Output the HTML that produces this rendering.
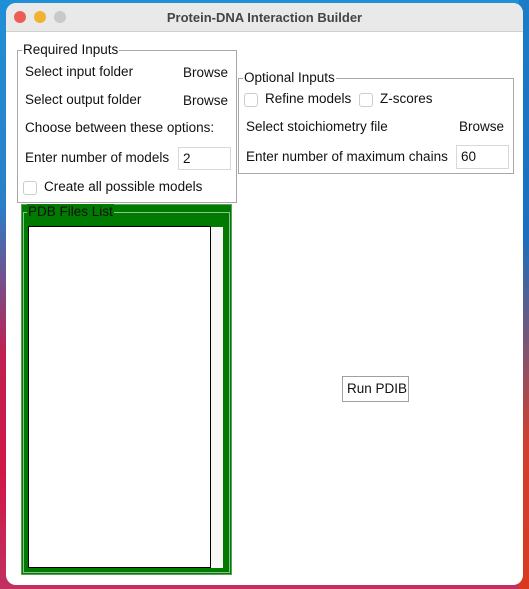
<!DOCTYPE html>
<html><head><meta charset="utf-8"><style>
*{margin:0;padding:0;box-sizing:border-box}
body{width:529px;height:589px;overflow:hidden;position:relative;font-family:"Liberation Sans",sans-serif;font-size:13.5px;color:#111;
background:linear-gradient(180deg,#1f8fd6 0%,#2a7fc8 35%,#c02050 60%,#d01848 80%,#c03060 100%)}
.bgr{position:absolute;right:0;top:0;width:10px;height:589px;background:linear-gradient(180deg,#1c7cc8 0%,#1a6fc0 40%,#d04030 75%,#d83a20 100%)}
.win{position:absolute;left:6px;top:3px;width:517px;height:582px;background:#fff;border-radius:10px;overflow:hidden}
.tb{height:29px;background:#e9e9e9;border-bottom:1px solid #d0d0d0;text-align:center;font-weight:bold;color:#444;line-height:29px;font-size:13px}
.dot{position:absolute;top:8px;width:12px;height:12px;border-radius:50%}
.a{position:absolute;white-space:nowrap}
.frame{position:absolute;border:1px solid #a8a8a8}
.lbl{position:absolute;background:#fff;padding:0 1px;line-height:14px}
.btn{position:absolute;background:#fff;border-radius:5px;line-height:19px;padding:0 2px}
.ent{position:absolute;border:1px solid #d8d8d8;background:#fff;padding-left:4px;line-height:21px}
.cb{position:absolute;width:14px;height:14px;border:1px solid #ccc;border-radius:3px;background:#fff}
</style></head><body>
<div class="bgr"></div>
<div class="win">
<div class="tb">Protein-DNA Interaction Builder</div>
<div class="dot" style="left:8px;background:#ed5d55"></div>
<div class="dot" style="left:28px;background:#f2b233"></div>
<div class="dot" style="left:48px;background:#c9c9c9"></div>
</div>
<!-- Required -->
<div class="frame" style="left:17px;top:50px;width:220px;height:153px"></div>
<div class="lbl" style="left:22px;top:43px">Required Inputs</div>
<div class="a" style="left:25px;top:64px">Select input folder</div>
<div class="btn" style="left:181px;top:63px">Browse</div>
<div class="a" style="left:25px;top:92px">Select output folder</div>
<div class="btn" style="left:181px;top:91px">Browse</div>
<div class="a" style="left:25px;top:120px">Choose between these options:</div>
<div class="a" style="left:25px;top:150px">Enter number of models</div>
<div class="ent" style="left:178px;top:147px;width:53px;height:23px">2</div>
<div class="cb" style="left:23px;top:181px"></div>
<div class="a" style="left:44px;top:179px">Create all possible models</div>
<!-- PDB -->
<div class="a" style="left:21px;top:204px;width:211px;height:371px;background:#007a00;border:1px solid #5aa05a"></div>
<div class="a" style="left:23px;top:212px;width:207px;height:361px;border:1px solid #8fc08f"></div>
<div class="a" style="left:27px;top:204px;background:#007a00;color:#111;line-height:15px;padding:0 1px">PDB Files List</div>
<div class="a" style="left:28px;top:226px;width:183px;height:342px;background:#fff;border:1px solid #000"></div>
<div class="a" style="left:211px;top:227px;width:12px;height:341px;background:#f7f7f7"></div>
<!-- Optional -->
<div class="frame" style="left:238px;top:78px;width:276px;height:96px"></div>
<div class="lbl" style="left:243px;top:71px">Optional Inputs</div>
<div class="cb" style="left:244px;top:93px"></div>
<div class="a" style="left:265px;top:91px">Refine models</div>
<div class="cb" style="left:359px;top:93px"></div>
<div class="a" style="left:380px;top:91px">Z-scores</div>
<div class="a" style="left:246px;top:119px">Select stoichiometry file</div>
<div class="btn" style="left:457px;top:117px">Browse</div>
<div class="a" style="left:246px;top:149px">Enter number of maximum chains</div>
<div class="ent" style="left:456px;top:145px;width:53px;height:24px">60</div>
<!-- Run -->
<div class="a" style="left:342px;top:376px;width:67px;height:26px;border:1px solid #a0a0a0;background:#fff"></div>
<div class="a" style="left:347px;top:381px">Run PDIB</div>
</body></html>
